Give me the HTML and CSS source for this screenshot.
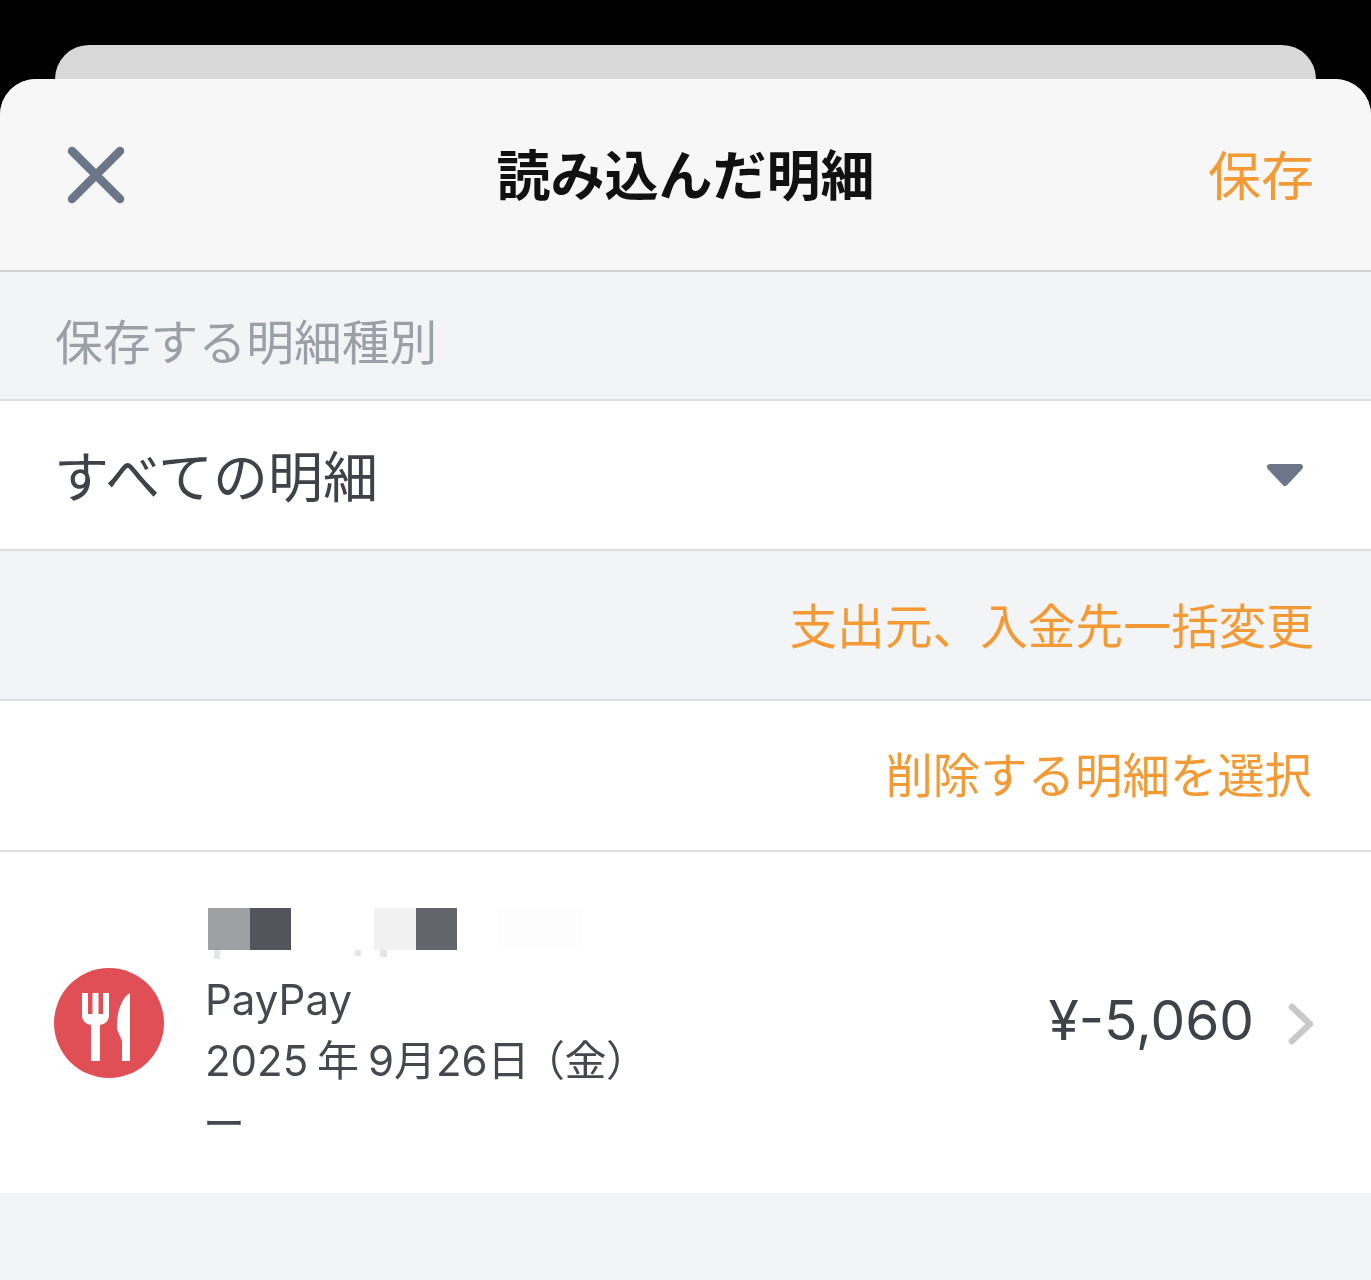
FILE: index.html
```html
<!DOCTYPE html>
<html lang="ja">
<head>
<meta charset="utf-8">
<title>読み込んだ明細</title>
<link rel="stylesheet" href="styles.css">
</head>
<body>
<div class="screen">
  <div class="back-sheet"></div>
  <main class="sheet">
    <header class="header">
      <svg class="close" width="58" height="58" viewBox="0 0 58 58" aria-label="閉じる"><path d="M5 5 L53 53 M53 5 L5 53" fill="none" stroke="#6b7689" stroke-width="8.500" stroke-linecap="round"/></svg>
      <h1 class="title">読み込んだ明細</h1>
      <span class="save">保存</span>
    </header>
    <div class="label-row"><span class="label-text">保存する明細種別</span></div>
    <div class="select-row">
      <span class="select-text">すべての明細</span>
      <svg class="caret" width="38" height="24" viewBox="0 0 38 24"><path d="M4 4 H34 L19 20 Z" fill="#6b7689" stroke="#6b7689" stroke-width="6" stroke-linejoin="round"/></svg>
    </div>
    <div class="action-row action-grey"><span>支出元、入金先一括変更</span></div>
    <div class="action-row action-white"><span>削除する明細を選択</span></div>
    <div class="item">
      <div class="mosaic">
        <i class="tile t1"></i><i class="tile t2"></i><i class="gap"></i><i class="tile t3"></i><i class="tile t4"></i><i class="gap-small"></i><i class="tile-wide"></i>
        <i class="smudge s1"></i><i class="smudge s2"></i><i class="smudge s3"></i>
      </div>
      <div class="item-main">
        <div class="badge">
          <svg width="48" height="68" viewBox="0 0 48 68"><path d="M0 0 H6 V21 H10.500 V0 H16.500 V21 H21 V0 H27 V22 C27 28 23 31 18 32 V68 H9 V32 C4 31 0 28 0 22 Z M48 0 V68 H40 V48 L35 36 C34 20 40 4 48 0 Z" fill="#fff"/></svg>
        </div>
        <div class="item-text">
          <div class="line">PayPay</div>
          <div class="line date">2025 年 9月26日 <span class="weekday">（金）</span></div>
          <div class="line dash">ー</div>
        </div>
        <div class="amount">¥-5,060</div>
        <svg class="chevron" width="26" height="42" viewBox="0 0 26 42"><path d="M4 4 L22 21 L4 38" fill="none" stroke="#c9c9c9" stroke-width="6.500" stroke-linecap="round" stroke-linejoin="round"/></svg>
      </div>
    </div>
  </main>
</div>
</body>
</html>
```
FILE: styles.css
```css
* { box-sizing: border-box; }
html, body { margin: 0; padding: 0; background: #000; }
body { font-family: "Inter", "Noto Sans CJK JP", sans-serif; }
.screen { width: 1371px; height: 1280px; overflow: hidden; padding-top: 45px; filter: blur(0.6px); }
.back-sheet { height: 34px; margin: 0 55px; background: #d8d8d8; border-radius: 34px 34px 0 0; }
.sheet { height: 1201px; background: #f3f4f6; border-radius: 36px 36px 0 0; overflow: hidden; }
.header { height: 193px; background: #f7f7f7; border-bottom: 2px solid #cfd1d4; display: flex; align-items: center; justify-content: center; position: relative; padding-bottom: 4px; }
.close { position: absolute; left: 67px; top: 67px; }
.title { margin: 0; font-size: 54px; font-weight: 700; color: #111; line-height: 1; font-family: "Noto Sans CJK JP", sans-serif; }
.save { position: absolute; right: 57px; top: 68px; font-size: 53px; line-height: 1; color: #f39a35; font-family: "Noto Sans CJK JP", sans-serif; }
.label-row { height: 129px; padding: 8px 0 0 55px; display: flex; align-items: center; font-size: 47.800px; color: #9a9fa8; border-bottom: 2px solid #dcdee1; }
.select-row { height: 150px; background: #fff; border-bottom: 2px solid #dcdee1; display: flex; align-items: center; justify-content: space-between; padding: 0 67px 0 54px; }
.select-text { font-size: 55px; color: #3f4349; margin-top: -4px; }
.caret { margin-top: 0; }
.action-row { display: flex; align-items: center; justify-content: flex-end; padding-right: 57px; font-size: 47.700px; color: #f39a35; border-bottom: 2px solid #dcdee1; }
.action-grey { height: 150px; padding-bottom: 4px; }
.action-white { height: 151px; background: #fff; padding-bottom: 7px; padding-right: 59px; font-size: 47.400px; }
.item { height: 341px; background: #fff; position: relative; }
.mosaic { position: absolute; left: 208px; top: 56px; display: flex; height: 42px; }
.tile { display: block; width: 41.500px; height: 42px; }
.gap { display: block; width: 83px; }
.gap-small { display: block; width: 41px; }
.tile-wide { display: block; width: 84px; height: 42px; background: #fdfdfd; }
.t1 { background: #9fa0a3; }
.t2 { background: #52555c; }
.t3 { background: #f1f1f2; }
.t4 { background: #62656b; }
.smudge { position: absolute; top: 42px; background: #e4e5e6; }
.s1 { left: 6px; width: 6px; height: 9px; }
.s2 { left: 147px; width: 6px; height: 6px; }
.s3 { left: 172px; width: 7px; height: 7px; }
.item-main { display: flex; align-items: center; height: 341px; padding: 0 57px 0 54px; position: relative; }
.badge { width: 110px; height: 110px; border-radius: 50%; background: #e04f56; display: flex; align-items: center; justify-content: center; padding: 8px 6px 0 0; flex: none; }
.item-text { margin-left: 41px; margin-top: 78px; flex: 1; }
.line { font-size: 42px; line-height: 61px; color: #45484e; white-space: nowrap; }
.date { font-feature-settings: "palt"; word-spacing: -3px; }
.weekday { margin-left: 4px; letter-spacing: 1px; }
.dash { margin-top: 2px; margin-left: -2px; }
.amount { font-size: 55px; color: #3f4349; margin-right: 34px; margin-top: -6px; }
.chevron { flex: none; margin-top: 2px; }
```
